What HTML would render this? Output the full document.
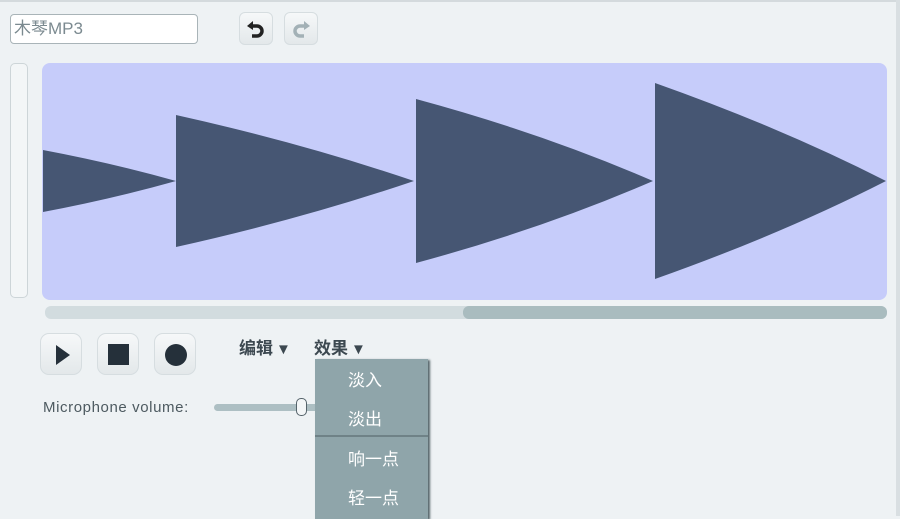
<!DOCTYPE html>
<html><head><meta charset="utf-8"><style>
body{margin:0;width:900px;height:516px;background:#eef2f4;position:relative;overflow:hidden;font-family:"Liberation Sans","Noto Sans CJK SC",sans-serif}
.a{position:absolute}
.btn{position:absolute;width:42px;height:42px;border-radius:9px;background:linear-gradient(#f6f8f9,#e3e8ea);border:1px solid #d6dde0;box-sizing:border-box}
.mi{position:absolute;left:33px;color:#fff;font-size:17px}
</style></head><body>
<div class="a" style="left:0;top:0;width:900px;height:2px;background:#d4dadd"></div>
<div class="a" style="right:0;top:0;width:4px;height:516px;background:#d9dfe2"></div>
<div class="a" style="left:10px;top:14px;width:188px;height:30px;box-sizing:border-box;border:1px solid #a9b4b8;border-radius:4px;background:#fff;font-size:17px;color:#7b8a90;line-height:28px;padding-left:3px">木琴MP3</div>
<div class="btn" style="left:239px;top:12px;width:34px;height:33px;border-radius:6px"></div>
<svg class="a" style="left:245px;top:17px" width="22" height="22" viewBox="0 0 22 22"><path d="M8 4 L2 9 L8 13 Z" fill="#222"/><path d="M6 9 H12 A5 5 0 0 1 12 19 H7" stroke="#222" stroke-width="3.5" fill="none"/></svg>
<div class="btn" style="left:284px;top:12px;width:34px;height:33px;border-radius:6px"></div>
<svg class="a" style="left:290px;top:17px" width="22" height="22" viewBox="0 0 22 22"><path d="M14 4 L20 9 L14 13 Z" fill="#a3b1b6"/><path d="M16 9 H10 A5 5 0 0 0 10 19 H14" stroke="#a3b1b6" stroke-width="3.5" fill="none"/></svg>
<div class="a" style="left:10px;top:63px;width:18px;height:235px;box-sizing:border-box;border:1px solid #cdd5d8;border-radius:5px;background:#f3f6f7"></div>
<svg class="a" style="left:42px;top:63px" width="845" height="237">
<rect width="845" height="237" rx="8" fill="#c6ccfa"/>
<g fill="#465673">
<path d="M1 87 Q70 100 134 118 Q70 136 1 149 Z"/>
<path d="M134 52 Q260 80 372 118 Q260 156 134 184 Z"/>
<path d="M374 36 Q500 70 611 118 Q500 166 374 200 Z"/>
<path d="M613 20 Q740 65 844 118 Q740 171 613 216 Z"/>
</g></svg>
<div class="a" style="left:45px;top:306px;width:842px;height:13px;border-radius:6px;background:#d2dcdf"></div>
<div class="a" style="left:463px;top:306px;width:424px;height:13px;border-radius:6px;background:#a9bcbf"></div>
<div class="btn" style="left:40px;top:333px"></div>
<svg class="a" style="left:55px;top:345px" width="16" height="20"><path d="M1 0 L15 10 L1 20Z" fill="#25303a"/></svg>
<div class="btn" style="left:97px;top:333px"></div>
<div class="a" style="left:108px;top:344px;width:21px;height:21px;background:#25303a"></div>
<div class="btn" style="left:154px;top:333px"></div>
<div class="a" style="left:165px;top:344px;width:22px;height:22px;border-radius:50%;background:#25303a"></div>
<div class="a" style="left:239px;top:334px;font-size:17px;font-weight:bold;color:#3c4850">编辑<span style="font-size:15px;margin-left:3px">▼</span></div>
<div class="a" style="left:314px;top:334px;font-size:17px;font-weight:bold;color:#3c4850">效果<span style="font-size:15px;margin-left:3px">▼</span></div>
<div class="a" style="left:43px;top:399px;font-size:15px;color:#4d5a60;letter-spacing:0.6px">Microphone volume:</div>
<div class="a" style="left:214px;top:404px;width:110px;height:7px;border-radius:4px;background:#adbfc3"></div>
<div class="a" style="left:296px;top:398px;width:11px;height:18px;border-radius:5px;border:1px solid #55636a;background:#f3f6f7;box-sizing:border-box"></div>
<div class="a" style="left:315px;top:359px;width:113px;height:160px;background:#8fa5aa;box-shadow:2px 1px 2px #56666b">
<div class="mi" style="top:7px">淡入</div>
<div class="mi" style="top:46px">淡出</div>
<div class="a" style="left:0;top:76px;width:113px;height:2px;background:#6f8287"></div>
<div class="mi" style="top:86px">响一点</div>
<div class="mi" style="top:125px">轻一点</div>
</div>
</body></html>
